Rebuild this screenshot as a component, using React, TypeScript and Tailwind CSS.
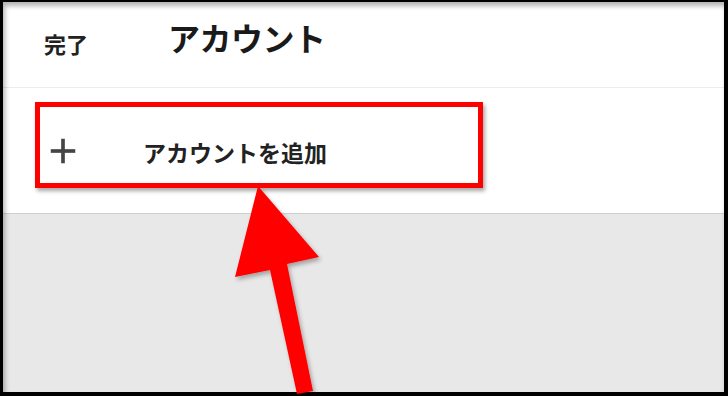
import { Plus } from "lucide-react";

const jp = { fontFamily: '"Noto Sans CJK JP", "Noto Sans", sans-serif' };

export default function App() {
  return (
    <div className="relative w-[728px] h-[396px] bg-black pt-[2px] pl-[3px] pr-[4px] pb-[4px]" style={jp}>
      <div className="relative h-full w-full overflow-hidden bg-[#e8e8e8] flex flex-col">
        {/* Header */}
        <div className="h-[86px] bg-white border-b border-[#ececec] flex items-center shrink-0">
          <span className="ml-[41px] mt-[-3px] text-[22px] font-semibold text-[#222]">完了</span>
          <h1 className="ml-[80px] mt-[-16px] text-[32px] font-bold text-[#1a1a1a] tracking-[-0.5px]">アカウント</h1>
        </div>

        {/* Add account section */}
        <div className="bg-white border-b border-[#cfcfcf] pt-[14px] pb-[25px] pl-[32px] shrink-0">
          <div className="w-[448px] h-[86px] border-[5px] border-[#ff0000] shadow-[2px_3px_4px_rgba(0,0,0,0.35)] flex items-center pt-[12px]">
            <Plus className="ml-[2px] w-[42px] h-[42px] text-[#454545]" strokeWidth={2.1} strokeLinecap="butt" />
            <span className="ml-[59px] mt-[2px] text-[23px] font-semibold text-[#222]">アカウントを追加</span>
          </div>
        </div>

        {/* Frame shadow */}
        <div className="pointer-events-none absolute inset-0 shadow-[inset_2px_4px_5px_rgba(0,0,0,0.3)]" />
      </div>

      {/* Arrow */}
      <svg className="absolute left-0 top-0" width="728" height="396" viewBox="0 0 728 396">
        <defs>
          <filter id="sh" x="-20%" y="-20%" width="140%" height="140%">
            <feDropShadow dx="2" dy="3" stdDeviation="2" floodColor="#000" floodOpacity="0.3" />
          </filter>
        </defs>
        <polygon
          points="258,186 319,257 287,264 313,391 297,394 270,270 235,277"
          fill="#ff0000"
          filter="url(#sh)"
        />
      </svg>
    </div>
  );
}
